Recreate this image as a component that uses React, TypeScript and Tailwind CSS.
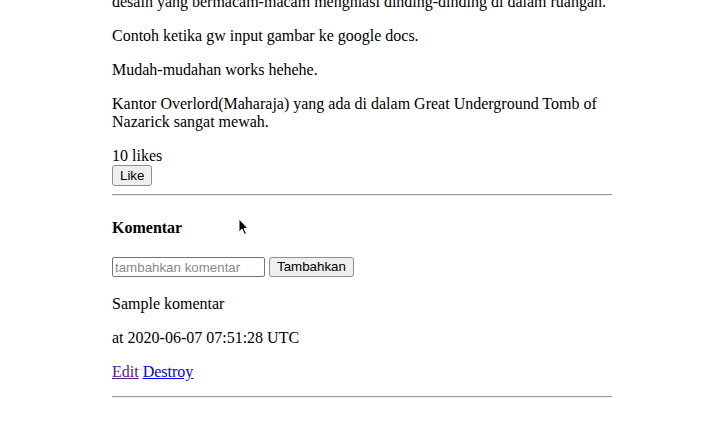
export default function App() {
  return (
    <div className="relative h-[444px] w-[713px] overflow-hidden bg-white text-black font-['Liberation_Serif',serif] text-[16px] leading-[18px]">
      <div className="ml-[112px] w-[500px]">
        <p className="mt-[-7px] mb-4 whitespace-nowrap">desain yang bermacam-macam menghiasi dinding-dinding di dalam ruangan.</p>
        <p className="mb-4">Contoh ketika gw input gambar ke google docs.</p>
        <p className="mb-4">Mudah-mudahan works hehehe.</p>
        <p className="mb-4">Kantor Overlord(Maharaja) yang ada di dalam Great Underground Tomb of Nazarick sangat mewah.</p>

        <div>
          <div>10 likes</div>
          <button className="h-[21px] rounded-[3px] border border-[#8f8f8f] bg-[#efefef] px-[7px] font-['Liberation_Sans',sans-serif] text-[13.33px] leading-[16px]">
            Like
          </button>
        </div>

        <hr className="my-2 border-t border-b border-t-[#9a9a9a] border-b-[#eeeeee]" />

        <h4 className="mt-[23px] mb-[20px] font-bold">Komentar</h4>

        <form className="mb-[18px] flex items-center gap-[4px]" onSubmit={(e) => e.preventDefault()}>
          <input
            placeholder="tambahkan komentar"
            className="h-[20px] w-[153px] rounded-[2px] border border-[#767676] px-[2px] font-['Liberation_Sans',sans-serif] text-[13.33px] placeholder:text-[#8a8a8a] outline-none"
          />
          <button className="h-[20px] rounded-[3px] border border-[#8f8f8f] bg-[#efefef] px-[7px] font-['Liberation_Sans',sans-serif] text-[13.33px] leading-[16px]">
            Tambahkan
          </button>
        </form>

        <p className="mb-4">Sample komentar</p>
        <p className="mb-4">at 2020-06-07 07:51:28 UTC</p>
        <p className="mb-[15px]">
          <a href="#" className="text-[#551a8b] underline">Edit</a>{' '}
          <a href="#" className="text-[#0000ee] underline">Destroy</a>
        </p>

        <hr className="border-t border-b border-t-[#9a9a9a] border-b-[#eeeeee]" />
      </div>

      {/* mouse pointer */}
      <svg className="absolute left-[238px] top-[218px]" width="12" height="18" viewBox="0 0 12 18">
        <path d="M1 1 L1 14 L4 11 L6.5 16.5 L8.5 15.5 L6 10.5 L10 10.5 Z" fill="#000" stroke="#fff" strokeWidth="1" />
      </svg>
    </div>
  );
}
